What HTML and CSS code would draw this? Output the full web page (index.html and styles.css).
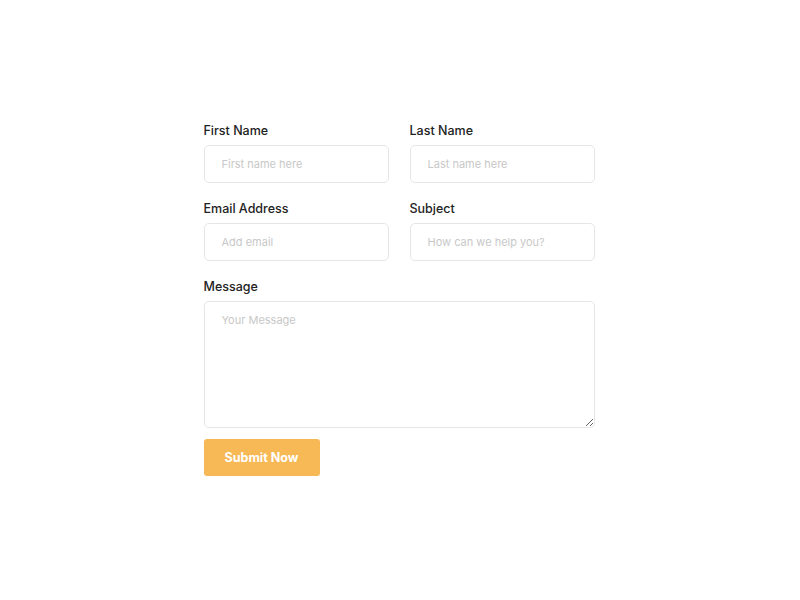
FILE: index.html
```html
<!DOCTYPE html>
<html lang="en">
<head>
  <meta charset="UTF-8">
  <title>Contact</title>
  <meta name="viewport" content="width=device-width, initial-scale=1">
  <link rel="stylesheet" href="styles.css">
</head>
<body>
  <form class="contact-form" onsubmit="return false">
    <div class="row">
      <div class="field">
        <label for="first_name">First Name</label>
        <input type="text" id="first_name" placeholder="First name here">
      </div>
      <div class="field">
        <label for="last_name">Last Name</label>
        <input type="text" id="last_name" placeholder="Last name here">
      </div>
    </div>

    <div class="row">
      <div class="field">
        <label for="email">Email Address</label>
        <input type="email" id="email" placeholder="Add email">
      </div>
      <div class="field">
        <label for="subject">Subject</label>
        <input type="text" id="subject" placeholder="How can we help you?">
      </div>
    </div>

    <div class="field">
      <label for="message">Message</label>
      <textarea id="message" placeholder="Your Message"></textarea>
    </div>

    <button type="submit">Submit Now</button>
  </form>
</body>
</html>
```

FILE: styles.css
```css
body {
  margin: 0;
  font-family: Inter, "Liberation Sans", sans-serif;
  background-color: #fff;
  display: flex;
  justify-content: center;
  padding-top: 123px;
}

.contact-form {
  width: 391px;
  margin-left: -2px;
}

.row {
  display: grid;
  grid-template-columns: 1fr 1fr;
  column-gap: 21px;
}

.field {
  margin-bottom: 18px;
}

label {
  display: block;
  font-size: 12.5px;
  font-weight: 500;
  line-height: 16px;
  color: #222;
  margin-bottom: 6px;
}

input, textarea {
  display: block;
  width: 100%;
  box-sizing: border-box;
  border: 1px solid #e6e6e6;
  border-radius: 5px;
  font-family: inherit;
  font-size: 11px;
  color: #333;
  padding: 0 17px;
  outline: none;
}

input {
  height: 38px;
}

textarea {
  height: 127px;
  padding-top: 11px;
  resize: vertical;
}

input::placeholder, textarea::placeholder {
  color: #c8c8c8;
}

.field:last-of-type {
  margin-bottom: 11px;
}

button {
  width: 116px;
  height: 37px;
  border: none;
  border-radius: 3px;
  background-color: #f7b955;
  color: #fff;
  font-family: inherit;
  font-size: 12.5px;
  font-weight: 700;
  cursor: pointer;
}
```
